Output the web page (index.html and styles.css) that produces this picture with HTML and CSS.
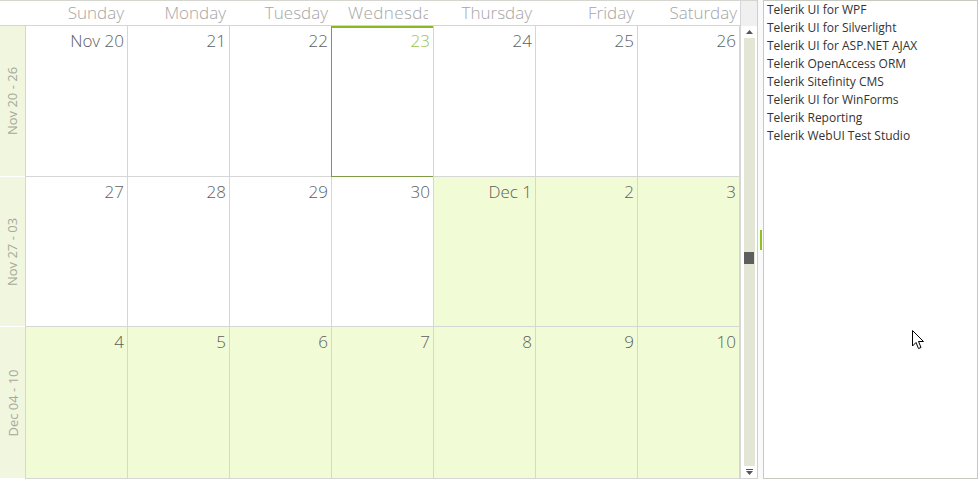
FILE: index.html
```html
<!DOCTYPE html>
<html lang="en">
<head>
    <meta charset="UTF-8">
    <meta name="viewport" content="width=device-width, initial-scale=1.0">
    <title>Month View Scheduler</title>
    <link rel="stylesheet" href="styles.css">
</head>
<body>
    <div class="app">
        <div class="scheduler">
            <div class="calendar">
                <div class="day-header">
                    <div class="corner"></div>
                    <div class="day-name">Sunday</div>
                    <div class="day-name">Monday</div>
                    <div class="day-name">Tuesday</div>
                    <div class="day-name day-name-clip"><span>Wednesday</span></div>
                    <div class="day-name">Thursday</div>
                    <div class="day-name">Friday</div>
                    <div class="day-name">Saturday</div>
                </div>

                <div class="week">
                    <div class="week-label"><span>Nov 20 - 26</span></div>
                    <div class="day"><span class="num">Nov 20</span></div>
                    <div class="day"><span class="num">21</span></div>
                    <div class="day"><span class="num">22</span></div>
                    <div class="day today"><span class="num">23</span></div>
                    <div class="day"><span class="num">24</span></div>
                    <div class="day"><span class="num">25</span></div>
                    <div class="day last"><span class="num">26</span></div>
                </div>

                <div class="week">
                    <div class="week-label"><span>Nov 27 - 03</span></div>
                    <div class="day"><span class="num">27</span></div>
                    <div class="day"><span class="num">28</span></div>
                    <div class="day"><span class="num">29</span></div>
                    <div class="day"><span class="num">30</span></div>
                    <div class="day other"><span class="num">Dec 1</span></div>
                    <div class="day other"><span class="num">2</span></div>
                    <div class="day other last"><span class="num">3</span></div>
                </div>

                <div class="week week-end">
                    <div class="week-label"><span>Dec 04 - 10</span></div>
                    <div class="day other"><span class="num">4</span></div>
                    <div class="day other"><span class="num">5</span></div>
                    <div class="day other"><span class="num">6</span></div>
                    <div class="day other"><span class="num">7</span></div>
                    <div class="day other"><span class="num">8</span></div>
                    <div class="day other"><span class="num">9</span></div>
                    <div class="day other last"><span class="num">10</span></div>
                </div>
            </div>

            <div class="scrollbar">
                <div class="scroll-head"></div>
                <div class="scroll-btn">
                    <svg width="9" height="6" viewBox="0 0 9 6"><path d="M4.5 1 L8 5 L1 5 Z" fill="#555"/></svg>
                </div>
                <div class="scroll-track">
                    <div class="scroll-thumb"></div>
                </div>
                <div class="scroll-btn">
                    <svg width="9" height="6" viewBox="0 0 9 6"><rect x="1" y="0" width="7" height="1" fill="#555"/><path d="M1 2 L8 2 L4.5 6 Z" fill="#555"/></svg>
                </div>
            </div>
        </div>

        <div class="splitter">
            <div class="grip"></div>
        </div>

        <ul class="product-list">
            <li>Telerik UI for WPF</li>
            <li>Telerik UI for Silverlight</li>
            <li>Telerik UI for ASP.NET AJAX</li>
            <li>Telerik OpenAccess ORM</li>
            <li>Telerik Sitefinity CMS</li>
            <li>Telerik UI for WinForms</li>
            <li>Telerik Reporting</li>
            <li>Telerik WebUI Test Studio</li>
        </ul>
    </div>

    <!-- mouse pointer captured in the screenshot -->
    <svg class="cursor" width="13" height="20" viewBox="0 0 13 20">
        <path d="M0.5 0.5 L0.5 16 L4 12.5 L6.5 18.5 L9 17.5 L6.5 11.5 L11.5 11.5 Z" fill="#fff" stroke="#000" stroke-width="1"/>
    </svg>
</body>
</html>
```

FILE: styles.css
```css
body {
    margin: 0;
    background-color: #ffffff;
    font-family: "Segoe UI", "Open Sans", Arial, sans-serif;
}

.app {
    display: flex;
    width: 978px;
    height: 479px;
    overflow: hidden;
}

.scheduler {
    display: flex;
    height: 479px;
}

.calendar {
    width: 740px;
    display: flex;
    flex-direction: column;
}

/* day names row */
.day-header {
    display: flex;
    height: 26px;
    box-sizing: border-box;
    border-top: 1px solid #d6d6d0;
    border-bottom: 1px solid #d6d6d0;
}

.corner {
    width: 25px;
    flex: none;
}

.day-name {
    width: 102px;
    flex: none;
    box-sizing: border-box;
    padding-right: 3px;
    text-align: right;
    color: #a6a6a6;
    font-size: 17px;
    font-weight: 300;
    line-height: 24px;
    overflow: hidden;
    white-space: nowrap;
}

.day-name-clip {
    text-align: left;
    padding-left: 17px;
    padding-right: 0;
}

.day-name-clip span {
    display: inline-block;
    width: 80px;
    overflow: hidden;
    vertical-align: top;
    letter-spacing: 0.4px;
}

.day-name:last-child {
    width: 103px;
}

/* weeks */
.week {
    display: flex;
    height: 151px;
}

.week-end {
    height: 152px;
}

.week-label {
    width: 25px;
    flex: none;
    box-sizing: border-box;
    background-color: #f1f6de;
    border-bottom: 1px solid #ffffff;
    display: flex;
    align-items: center;
    justify-content: center;
}

.week-label span {
    transform: rotate(-90deg);
    white-space: nowrap;
    font-size: 13px;
    color: #a6a99c;
}

.day {
    width: 102px;
    flex: none;
    box-sizing: border-box;
    border-left: 1px solid #d6d6d6;
    border-bottom: 1px solid #d6d6d6;
    padding: 4px 3px 0 0;
    text-align: right;
    position: relative;
}

.day.last {
    width: 103px;
    border-right: 1px solid #d6d6d6;
}

.day.other {
    background-color: #f1fbd5;
}

.num {
    font-size: 17px;
    font-weight: 300;
    line-height: 20px;
    color: #5e5e5e;
}

.today .num {
    color: #9cc33a;
}

.today::after {
    content: "";
    position: absolute;
    left: -1px;
    right: -1px;
    top: 0;
    bottom: -1px;
    border: 1px solid #7f9a45;
    border-top: 2px solid #8ab923;
}

/* scrollbar */
.scrollbar {
    width: 18px;
    display: flex;
    flex-direction: column;
    box-sizing: border-box;
    border-left: 1px solid #d6d6d6;
    border-right: 1px solid #cfcfc8;
    border-bottom: 1px solid #d6d6d0;
}

.scroll-head {
    height: 26px;
    flex: none;
    background-color: #f0f0f0;
    border-top: 1px solid #d6d6d0;
    box-sizing: border-box;
}

.scroll-btn {
    height: 12px;
    flex: none;
    display: flex;
    align-items: center;
    justify-content: center;
}

.scroll-track {
    flex: 1;
    margin: 0 2px 0 3px;
    background-color: #e3e5d5;
    position: relative;
}

.scroll-thumb {
    position: absolute;
    left: 0;
    right: 1px;
    top: 214px;
    height: 12px;
    background-color: #5e5e5e;
}

/* splitter between calendar and list */
.splitter {
    width: 5px;
    flex: none;
    display: flex;
    align-items: center;
    justify-content: center;
    background-color: #fafafa;
}

.grip {
    width: 2px;
    height: 20px;
    background-color: #8cc21c;
}

/* product list */
.product-list {
    flex: 1;
    margin: 0;
    padding: 0 3px;
    list-style: none;
    border: 1px solid #c8c9c0;
    box-sizing: border-box;
    height: 479px;
}

.product-list li {
    font-size: 12px;
    line-height: 18px;
    color: #333333;
    white-space: nowrap;
}

.cursor {
    position: absolute;
    left: 912px;
    top: 330px;
}
```
